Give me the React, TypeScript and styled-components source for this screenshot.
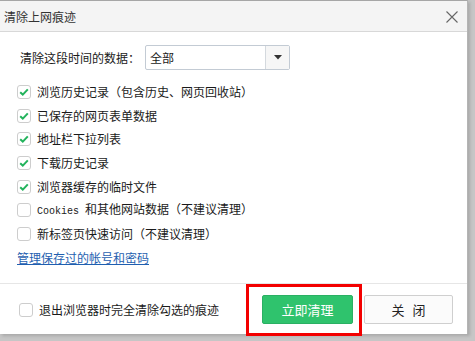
import React from "react";
import styled, { createGlobalStyle } from "styled-components";

const Global = createGlobalStyle`
  html, body { margin: 0; padding: 0; }
  body {
    background: #c6c6c6;
    font-family: "Noto Sans CJK SC", "Noto Sans", sans-serif;
    font-size: 12px;
    color: #1a1a1a;
    width: 475px;
    height: 341px;
    overflow: hidden;
  }
`;

const Dialog = styled.div`
  width: 467px;
  height: 333px;
  background: #fff;
  border-top: 1px solid #a6a6a6;
  border-right: 1px solid #b4b4b4;
  display: flex;
  flex-direction: column;
  box-shadow: 2px 2px 3px rgba(0, 0, 0, 0.15);
`;

const TitleBar = styled.div`
  height: 30px;
  flex: none;
  background: #f4f4f4;
  border-bottom: 1px solid #d8d8d8;
  display: flex;
  align-items: center;
  justify-content: space-between;
  padding: 0 9px 0 4px;
`;

const Title = styled.div`
  font-size: 12px;
  color: #333;
  line-height: 16px;
  margin-top: 2px;
`;

const CloseIcon = styled.svg`
  width: 12px;
  height: 12px;
  margin-top: 2px;
`;

const Body = styled.div`
  flex: 1;
  padding: 13px 0 0 17px;
  display: flex;
  flex-direction: column;
`;

const SelectRow = styled.div`
  display: flex;
  align-items: center;
  height: 25px;
  padding-left: 3px;
`;

const Label = styled.span`
  width: 125px;
  line-height: 16px;
`;

const Select = styled.div`
  width: 143px;
  height: 23px;
  border: 1px solid #c3cbd4;
  border-radius: 2px;
  display: flex;
  align-items: stretch;
`;

const SelectValue = styled.div`
  flex: 1;
  padding-left: 4px;
  display: flex;
  align-items: center;
  line-height: 16px;
`;

const SelectArrow = styled.div`
  width: 23px;
  border-left: 1px solid #d4d9de;
  background: #f6f6f6;
  display: flex;
  align-items: center;
  justify-content: center;
`;

const List = styled.div`
  margin-top: 10px;
  display: flex;
  flex-direction: column;
`;

const Row = styled.label`
  height: 23.7px;
  display: flex;
  align-items: center;
  line-height: 16px;
`;

const Box = styled.span<{ $checked?: boolean }>`
  width: 12px;
  height: 12px;
  border: 1px solid #cdcdcd;
  border-radius: 3px;
  background: #fff;
  display: flex;
  align-items: center;
  justify-content: center;
  margin-right: 6px;
  flex: none;
`;

const Mono = styled.span`
  font-family: "Liberation Mono", monospace;
  font-size: 10px;
  margin-right: 6px;
`;

const Link = styled.a`
  height: 23.7px;
  display: flex;
  align-items: center;
  color: #1f5fb0;
  text-decoration: underline;
  line-height: 16px;
  cursor: pointer;
`;

const Footer = styled.div`
  height: 50px;
  flex: none;
  border-top: 1px solid #e6e6e6;
  display: flex;
  align-items: center;
  padding: 0 14px 0 19px;
`;

const FooterCheck = styled.label`
  display: flex;
  align-items: center;
  flex: 1;
  line-height: 16px;
  margin-top: 1px;
`;

const Highlight = styled.div`
  position: relative;
  display: flex;
`;

const RedFrame = styled.div`
  position: absolute;
  left: -16px;
  top: -11px;
  width: 110px;
  height: 46px;
  border: 3px solid #f30000;
  pointer-events: none;
`;

const Button = styled.button<{ $primary?: boolean }>`
  height: 29px;
  width: ${(p) => (p.$primary ? "91px" : "89px")};
  margin-left: ${(p) => (p.$primary ? "0" : "11px")};
  border-radius: 2px;
  font-family: "Noto Sans CJK SC", "Noto Sans", sans-serif;
  font-size: 13px;
  padding: 0;
  border: 1px solid ${(p) => (p.$primary ? "#2ab063" : "#cfcfcf")};
  background: ${(p) => (p.$primary ? "#2fc36d" : "#fbfbfb")};
  color: ${(p) => (p.$primary ? "#fff" : "#222")};
  letter-spacing: ${(p) => (p.$primary ? "0" : "8px")};
  text-indent: ${(p) => (p.$primary ? "0" : "8px")};
`;

const Check = () => (
  <svg width="10" height="8" viewBox="0 0 10 8">
    <path d="M1.2 4.2 L3.8 6.6 L8.8 1.4" fill="none" stroke="#22b35c" strokeWidth="2" />
  </svg>
);

const items: { text: React.ReactNode; checked: boolean }[] = [
  { text: "浏览历史记录（包含历史、网页回收站）", checked: true },
  { text: "已保存的网页表单数据", checked: true },
  { text: "地址栏下拉列表", checked: true },
  { text: "下载历史记录", checked: true },
  { text: "浏览器缓存的临时文件", checked: true },
  {
    text: (
      <>
        <Mono>Cookies</Mono>和其他网站数据（不建议清理）
      </>
    ),
    checked: false,
  },
  { text: "新标签页快速访问（不建议清理）", checked: false },
];

export default function App() {
  return (
    <>
      <Global />
      <Dialog>
        <TitleBar>
          <Title>清除上网痕迹</Title>
          <CloseIcon viewBox="0 0 12 12">
            <path d="M0.5 0.5 L11.5 11.5 M11.5 0.5 L0.5 11.5" stroke="#666" strokeWidth="1.1" />
          </CloseIcon>
        </TitleBar>
        <Body>
          <SelectRow>
            <Label>清除这段时间的数据：</Label>
            <Select>
              <SelectValue>全部</SelectValue>
              <SelectArrow>
                <svg width="8" height="5" viewBox="0 0 8 5">
                  <path d="M0 0 L8 0 L4 4.5 Z" fill="#333" />
                </svg>
              </SelectArrow>
            </Select>
          </SelectRow>
          <List>
            {items.map((it, i) => (
              <Row key={i}>
                <Box $checked={it.checked}>{it.checked && <Check />}</Box>
                <span>{it.text}</span>
              </Row>
            ))}
            <Link>管理保存过的帐号和密码</Link>
          </List>
        </Body>
        <Footer>
          <FooterCheck>
            <Box />
            <span>退出浏览器时完全清除勾选的痕迹</span>
          </FooterCheck>
          <Highlight>
            <Button $primary>立即清理</Button>
            <RedFrame />
          </Highlight>
          <Button>关闭</Button>
        </Footer>
      </Dialog>
    </>
  );
}
